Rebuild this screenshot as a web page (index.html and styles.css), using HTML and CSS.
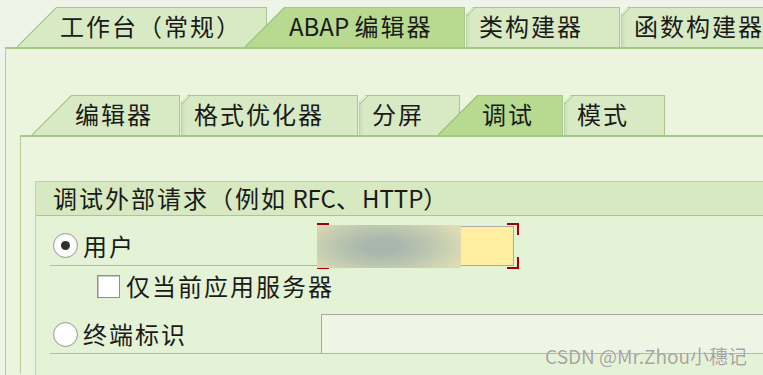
FILE: index.html
```html
<!DOCTYPE html>
<html lang="zh-CN">
<head>
  <meta charset="UTF-8" />
  <title>ABAP 编辑器 - 调试</title>
  <link rel="stylesheet" href="styles.css">
</head>
<body>
  <div class="tabs top-tabs">
    <div class="tab slanted first"><span class="slant"></span><span class="label">工作台（常规）</span></div>
    <div class="tab slanted active w-abap"><span class="slant"></span><span class="label"><span class="latin">ABAP&nbsp;</span>编辑器</span></div>
    <div class="tab plain w-class"><span class="label">类构建器</span></div>
    <div class="tab plain w-func"><span class="label">函数构建器</span></div>
  </div>

  <div class="panel">
    <div class="tabs sub-tabs">
      <div class="tab slanted first"><span class="slant"></span><span class="label w-edit">编辑器</span></div>
      <div class="tab plain w-format"><span class="label">格式优化器</span></div>
      <div class="tab plain w-split"><span class="label">分屏</span></div>
      <div class="tab slanted active"><span class="slant"></span><span class="label w-debug">调试</span></div>
      <div class="tab plain w-mode"><span class="label">模式</span></div>
    </div>

    <div class="inner-panel">
      <div class="group">
        <div class="group-title">调试外部请求（例如<span class="latin"> RFC</span>、<span class="latin">HTTP</span>）</div>
        <div class="group-body">
          <div class="row row-user">
            <div class="row-label">
              <span class="radio checked"></span>
              <span>用户</span>
            </div>
            <div class="field-user">
              <div class="user-box"><span class="blur"></span></div>
            </div>
          </div>
          <div class="row row-server">
            <span class="checkbox"></span>
            <span>仅当前应用服务器</span>
          </div>
          <div class="row row-terminal">
            <div class="row-label">
              <span class="radio"></span>
              <span>终端标识</span>
            </div>
            <div class="field-terminal"></div>
          </div>
        </div>
      </div>
    </div>
  </div>

  <div class="watermark">CSDN @Mr.Zhou小穗记</div>
</body>
</html>
```

FILE: styles.css
```css
body {
  margin: 0;
  background: #eef4e7;
  font-family: "Noto Sans CJK SC", "DejaVu Sans", sans-serif;
  font-size: 24px;
  line-height: 28px;
  letter-spacing: 2px;
  color: #1a1a1a;
  overflow: hidden;
  height: 375px;
  position: relative;
}

.latin {
  letter-spacing: 0;
}

/* tab rows */
.tabs {
  display: flex;
  height: 40px;
  white-space: nowrap;
  overflow: hidden;
}

.top-tabs {
  padding-top: 7px;
  padding-left: 17px;
}

.tab {
  display: flex;
  flex-shrink: 0;
  height: 40px;
  position: relative;
}

.tab .label {
  display: flex;
  align-items: center;
  box-sizing: border-box;
  height: 40px;
  padding-left: 3px;
  padding-bottom: 4px;
  background: #d8eac4;
  border-top: 1px solid #a9c78c;
  border-right: 1px solid #a9c78c;
}

.tab .slant {
  width: 40px;
  height: 40px;
  background: linear-gradient(to bottom right, transparent calc(50% - 1px), #a2c383 50%, #d8eac4 calc(50% + 1px));
}

.tab.active {
  margin-left: -22px;
  z-index: 1;
}

.tab.active .label {
  background: #b7da90;
  padding-left: 4px;
}

.tab.active .slant {
  background: linear-gradient(to bottom right, transparent calc(50% - 1px), #98bd76 50%, #b7da90 calc(50% + 1px));
}

.tab.plain {
  margin-left: 1px;
}

.tab.plain .label {
  width: 100%;
  padding-left: 12px;
  border-left: 1px solid #b9d2a1;
  background:
    linear-gradient(135deg, #d8eac4 5px, #a9c78c 5px, #a9c78c 6px, transparent 6px),
    linear-gradient(to right, #cbdfb5, #d8eac4 4px);
  clip-path: polygon(7px 0, 100% 0, 100% 100%, 0 100%, 0 7px);
}

.top-tabs .first .label { width: 210px; }
.w-abap .label { width: 180px; }
.w-class { width: 154px; }
.w-func { width: 150px; }

/* outer panel */
.panel {
  margin-left: 5px;
  border-top: 2px solid #a6c685;
  border-left: 1px solid #b3cf98;
  background: #ebf4df;
  padding-top: 46px;
  padding-left: 14px;
  height: 280px;
}

.sub-tabs {
  padding-left: 12px;
}

.sub-tabs .label {
  padding-bottom: 3px;
}

.w-edit { width: 108px; }
.w-format { width: 177px; }
.w-split { width: 101px; }
.w-debug { width: 85px; }
.w-mode { width: 101px; }

.inner-panel {
  border-top: 2px solid #a6c685;
  border-left: 1px solid #b3cf98;
  padding-top: 44px;
  padding-left: 14px;
  height: 193px;
}

/* group box */
.group {
  border-top: 1px solid #bcd4a6;
  border-left: 1px solid #bcd4a6;
  background: #e4f2d5;
  height: 193px;
}

.group-title {
  box-sizing: border-box;
  height: 34px;
  line-height: 32px;
  padding-left: 17px;
  background: #d6e9c0;
  border-bottom: 1px solid #a8c88c;
}

.group-body {
  padding-left: 14px;
}

.row {
  display: flex;
  align-items: center;
}

.row-label {
  display: flex;
  align-items: center;
  gap: 5px;
  padding-left: 3px;
  box-sizing: border-box;
  flex-shrink: 0;
}

.row-user {
  align-items: flex-start;
  height: 50px;
}

.row-user .row-label {
  width: 267px;
  height: 50px;
  padding-top: 16px;
  align-items: flex-start;
  border-bottom: 1px solid #b0b6ad;
}

.row-server {
  height: 40px;
  padding-left: 47px;
  gap: 6px;
}

.row-terminal {
  height: 47px;
  border-bottom: 1px solid #b0b6ad;
  align-items: flex-end;
}

.row-terminal .row-label {
  width: 271px;
  height: 47px;
  padding-top: 9px;
}

/* controls */
.radio {
  width: 23px;
  height: 23px;
  margin-top: 1px;
  border-radius: 50%;
  border: 1px solid #9a9a9a;
  background: radial-gradient(circle, #ffffff 55%, #e4e4e4 100%);
  display: flex;
  align-items: center;
  justify-content: center;
  flex-shrink: 0;
}

.row-terminal .radio {
  margin-top: 0;
}

.radio.checked::after {
  content: "";
  width: 9px;
  height: 9px;
  border-radius: 50%;
  background: #2c332c;
}

.checkbox {
  width: 21px;
  height: 21px;
  border: 1px solid #8f8f8f;
  box-shadow: inset 1px 1px 0 #c9c9c9;
  background: #ffffff;
  flex-shrink: 0;
}

.field-user {
  width: 202px;
  height: 46px;
  margin-top: 7px;
  box-sizing: border-box;
  padding: 3px 5px 3px 1px;
  background:
    linear-gradient(#a50000, #a50000) left top / 12px 2px no-repeat,
    linear-gradient(#a50000, #a50000) left top / 2px 12px no-repeat,
    linear-gradient(#a50000, #a50000) right top / 12px 2px no-repeat,
    linear-gradient(#a50000, #a50000) right top / 2px 12px no-repeat,
    linear-gradient(#a50000, #a50000) left bottom / 12px 2px no-repeat,
    linear-gradient(#a50000, #a50000) left bottom / 2px 12px no-repeat,
    linear-gradient(#a50000, #a50000) right bottom / 12px 2px no-repeat,
    linear-gradient(#a50000, #a50000) right bottom / 2px 12px no-repeat;
}

.user-box {
  height: 100%;
  box-sizing: border-box;
  border: 1px solid #ababab;
  background: #ffeea0;
  display: flex;
}

.blur {
  width: 144px;
  margin: -2px 0 -3px -2px;
  background: radial-gradient(ellipse 60% 80% at 45% 50%, #a8b7ad 20%, #bcc6b0 55%, #dcdcb4 100%);
}

.field-terminal {
  flex: 1;
  height: 39px;
  box-sizing: border-box;
  border: 1px solid #a6a6a6;
  border-right: none;
  border-bottom: none;
  background: #eef5e5;
}

.watermark {
  position: absolute;
  right: 16px;
  bottom: 8px;
  font-size: 19px;
  line-height: 22px;
  letter-spacing: 0;
  color: rgba(140, 140, 140, 0.8);
  text-shadow: 0 0 1px #ffffff;
}
```
